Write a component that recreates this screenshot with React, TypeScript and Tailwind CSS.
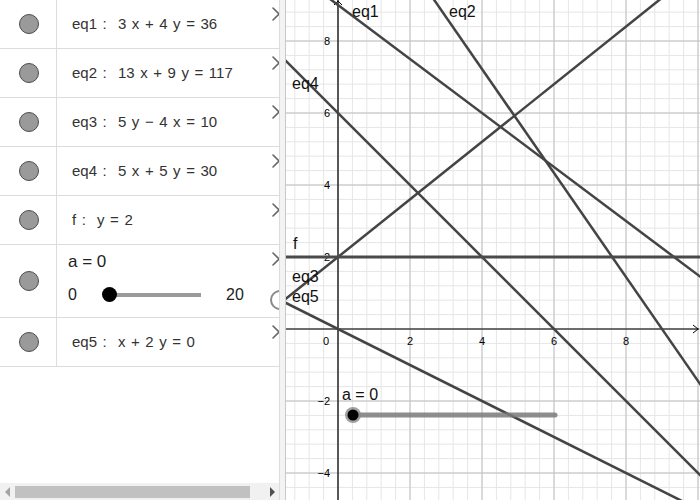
import { ChevronRight } from "lucide-react";

type Row = { label: string; eq: string };

const ROWS_TOP: Row[] = [
  { label: "eq1", eq: "3 x + 4 y = 36" },
  { label: "eq2", eq: "13 x + 9 y = 117" },
  { label: "eq3", eq: "5 y − 4 x = 10" },
  { label: "eq4", eq: "5 x + 5 y = 30" },
  { label: "f", eq: "y = 2" },
];

// graphics view: 414 x 500, origin at (52, 329), 36px per unit
const OX = 52;
const OY = 329;
const U = 36;
const sx = (x: number) => OX + x * U;
const sy = (y: number) => OY - y * U;

const LINES: { f: (x: number) => number; w?: number; c?: string }[] = [
  { f: (x) => 9 - 0.75 * x },
  { f: (x) => 13 - (13 / 9) * x },
  { f: (x) => 2 + 0.8 * x },
  { f: (x) => 6 - x },
  { f: () => 2, w: 3, c: "#4a4a4a" },
  { f: (x) => -x / 2 },
];

function Dot() {
  return <span className="block h-[20px] w-[20px] rounded-full border border-[#4d4d4d] bg-[#9a9a9a]" />;
}

function Chevron() {
  return (
    <ChevronRight
      size={24}
      strokeWidth={1.6}
      className="absolute left-[264px] top-[2px] text-[#666]"
    />
  );
}

function EqRow({ label, eq }: Row) {
  return (
    <div className="relative flex h-[49px] border-b border-[#dcdcdc]">
      <div className="flex w-[57px] shrink-0 items-center justify-center border-r border-[#dcdcdc] pl-[1px]">
        <Dot />
      </div>
      <div className="flex items-center pl-[15px] pt-[1px] text-[15px] text-[#333]">
        <span className="whitespace-pre [word-spacing:1.4px]">
          {label} :  {eq}
        </span>
      </div>
      <Chevron />
    </div>
  );
}

function AlgebraPanel() {
  return (
    <div className="relative flex h-full w-[279px] shrink-0 flex-col overflow-hidden bg-white">
      {ROWS_TOP.map((r) => (
        <EqRow key={r.label} {...r} />
      ))}

      <div className="relative flex h-[73px] border-b border-[#dcdcdc]">
        <div className="flex w-[57px] shrink-0 items-center justify-center border-r border-[#dcdcdc] pl-[1px]">
          <Dot />
        </div>
        <div className="flex flex-1 flex-col pl-[11px] pt-[6px] text-[#222]">
          <span className="text-[17px] leading-[22px]">a = 0</span>
          <div className="mt-[10px] flex items-center">
            <span className="w-[42px] text-[16px]">0</span>
            <div className="relative h-[4px] w-[91px] bg-[#9a9a9a]">
              <span className="absolute left-[-8px] top-[-6px] h-[15px] w-[15px] rounded-full bg-black" />
            </div>
            <span className="ml-[25px] text-[16px]">20</span>
          </div>
        </div>
        <Chevron />
      </div>

      <EqRow label="eq5" eq="x + 2 y = 0" />

      <div className="flex-1" />

      <div className="flex h-[17px] items-center bg-[#f1f1f1]">
        <span className="ml-[5px] h-0 w-0 border-y-[5px] border-r-[5px] border-y-transparent border-r-[#a3a3a3]" />
        <span className="ml-[5px] h-[12px] w-[235px] bg-[#c1c1c1]" />
        <span className="ml-[20px] h-0 w-0 border-y-[5px] border-l-[5px] border-y-transparent border-l-[#505050]" />
      </div>

      <span className="absolute left-[270px] top-[290px] flex h-[20px] w-[20px] items-center justify-center rounded-full border-2 border-[#8a8a8a] bg-white">
        <span className="h-[8px] w-[2px] bg-[#8a8a8a]" />
      </span>
    </div>
  );
}

function Graphics() {
  const minorX: number[] = [];
  for (let k = -4; k <= 25; k++) minorX.push(OX + k * 14.4);
  const minorY: number[] = [];
  for (let k = -25; k <= 12; k++) minorY.push(OY + k * 14.4);
  const majorX = [-20, 52, 124, 196, 268, 340, 412];
  const majorY = [41, 113, 185, 257, 329, 401, 473];

  return (
    <div className="h-full w-[414px] shrink-0 bg-white">
      <svg width="414" height="500" viewBox="0 0 414 500" className="block">
        {minorX.map((x) => (
          <line key={"mx" + x} x1={x} y1={0} x2={x} y2={500} stroke="#e6e6e6" strokeWidth={1} />
        ))}
        {minorY.map((y) => (
          <line key={"my" + y} x1={0} y1={y} x2={414} y2={y} stroke="#e6e6e6" strokeWidth={1} />
        ))}
        {majorX.map((x) => (
          <line key={"Mx" + x} x1={x} y1={0} x2={x} y2={500} stroke="#c0c0c0" strokeWidth={1} />
        ))}
        {majorY.map((y) => (
          <line key={"My" + y} x1={0} y1={y} x2={414} y2={y} stroke="#c0c0c0" strokeWidth={1} />
        ))}

        {/* axes */}
        <line x1={OX} y1={0} x2={OX} y2={500} stroke="#000" strokeWidth={1.2} />
        <line x1={0} y1={OY} x2={413} y2={OY} stroke="#000" strokeWidth={1.2} />
        <polyline points="48,5 52,1 56,5" fill="none" stroke="#000" strokeWidth={1} />
        <polyline points="407,325 412,329 407,333" fill="none" stroke="#000" strokeWidth={1} />

        {/* tick labels */}
        <g fontFamily="'Liberation Sans', Arial, sans-serif" fontSize="11" fill="#000">
          <text x={44} y={45} textAnchor="end">8</text>
          <text x={44} y={117} textAnchor="end">6</text>
          <text x={44} y={189} textAnchor="end">4</text>
          <text x={44} y={261} textAnchor="end">2</text>
          <text x={40} y={345} textAnchor="middle">0</text>
          <text x={124} y={345} textAnchor="middle">2</text>
          <text x={196} y={345} textAnchor="middle">4</text>
          <text x={268} y={345} textAnchor="middle">6</text>
          <text x={340} y={345} textAnchor="middle">8</text>
          <text x={44} y={405} textAnchor="end">−2</text>
          <text x={44} y={477} textAnchor="end">−4</text>
        </g>

        {/* lines */}
        {LINES.map((l, i) => (
          <line
            key={i}
            x1={sx(-2)}
            y1={sy(l.f(-2))}
            x2={sx(12)}
            y2={sy(l.f(12))}
            stroke={l.c ?? "#444"}
            strokeWidth={l.w ?? 2.5}
          />
        ))}

        {/* labels */}
        <g fontFamily="'Liberation Sans', Arial, sans-serif" fontSize="16" fill="#111">
          <text x={66} y={17}>eq1</text>
          <text x={163} y={17}>eq2</text>
          <text x={6} y={89}>eq4</text>
          <text x={7} y={249}>f</text>
          <text x={6} y={282}>eq3</text>
          <text x={6} y={302}>eq5</text>
          <text x={56} y={400}>a = 0</text>
        </g>

        {/* slider a */}
        <line x1={67} y1={415} x2={269} y2={415} stroke="#7a7a7a" strokeOpacity={0.85} strokeWidth={5} strokeLinecap="round" />
        <circle cx={67} cy={415} r={8} fill="#8a8a8a" fillOpacity={0.8} />
        <circle cx={67} cy={415} r={5.5} fill="#000" />
      </svg>
    </div>
  );
}

export default function App() {
  return (
    <div className="flex h-[500px] w-[700px] overflow-hidden bg-white font-['Liberation_Sans',Arial,sans-serif]">
      <AlgebraPanel />
      <div className="h-full w-[7px] shrink-0 border-l border-r border-l-[#dcdcdc] border-r-[#c8c8c8] bg-[#f3f3f3]" />
      <Graphics />
    </div>
  );
}
